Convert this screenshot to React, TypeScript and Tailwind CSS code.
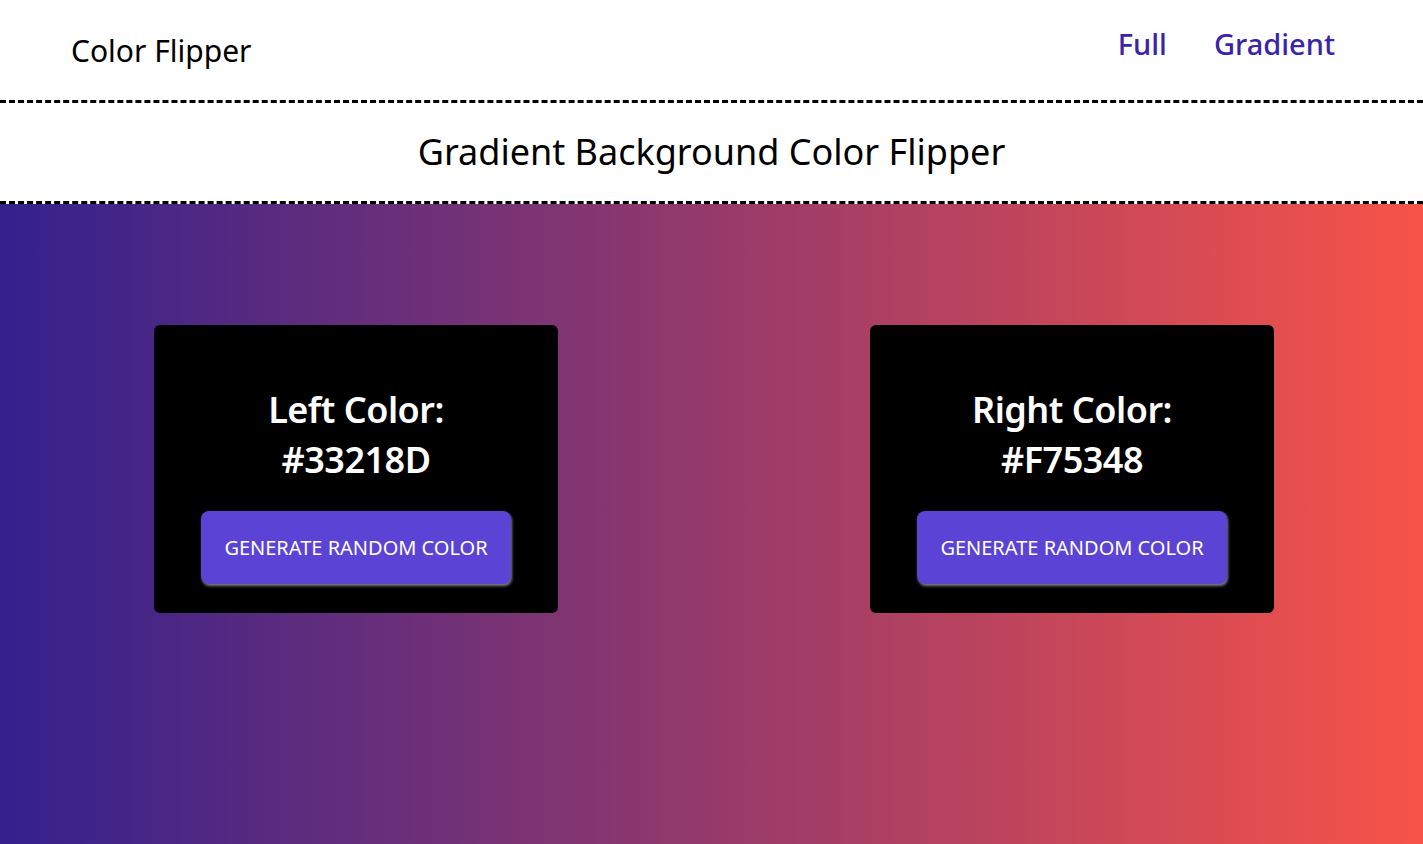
import React, { useState } from 'react';

const randomHex = () =>
  '#' +
  Math.floor(Math.random() * 0xffffff)
    .toString(16)
    .padStart(6, '0')
    .toUpperCase();

const ColorCard = ({ label, color, onGenerate }: { label: string; color: string; onGenerate: () => void }) => {
  return (
    <div className="w-[404px] h-[288px] bg-black rounded-md flex flex-col items-center pt-[60px]">
      <h2 className="text-white text-[36px] leading-[50px] font-semibold text-center tracking-[-0.5px]">
        {label} Color:
        <br />
        {color}
      </h2>
      <button
        onClick={onGenerate}
        className="mt-[26px] w-[310px] h-[73px] rounded-lg bg-[#5b43d6] text-white text-[20px] uppercase shadow-[1px_2px_3px_rgba(160,160,160,0.8)]"
      >
        Generate Random Color
      </button>
    </div>
  );
};

const App = () => {
  const [left, setLeft] = useState('#33218D');
  const [right, setRight] = useState('#F75348');

  return (
    <div className="min-h-screen flex flex-col font-['Noto_Sans',sans-serif]">
      {/* Header */}
      <header className="h-[103px] flex items-start justify-between border-b-[3px] border-dashed border-black pl-[71px] pr-[88px]">
        <div className="mt-[30px] text-[30px] text-black leading-[42px]">Color Flipper</div>
        <nav className="mt-[24px] flex gap-[47px] text-[29px] font-medium text-[#3b24a8] leading-[40px]">
          <a href="#">Full</a>
          <a href="#">Gradient</a>
        </nav>
      </header>

      {/* Title */}
      <div className="h-[101px] flex items-center justify-center border-b-[3px] border-dashed border-black">
        <h1 className="text-[36px] text-black">Gradient Background Color Flipper</h1>
      </div>

      {/* Gradient area */}
      <main
        className="flex-1 flex justify-between items-start pt-[121px] pl-[154px] pr-[149px]"
        style={{ background: `linear-gradient(to right, ${left}, ${right})` }}
      >
        <ColorCard label="Left" color={left} onGenerate={() => setLeft(randomHex())} />
        <ColorCard label="Right" color={right} onGenerate={() => setRight(randomHex())} />
      </main>
    </div>
  );
};

export default App;
